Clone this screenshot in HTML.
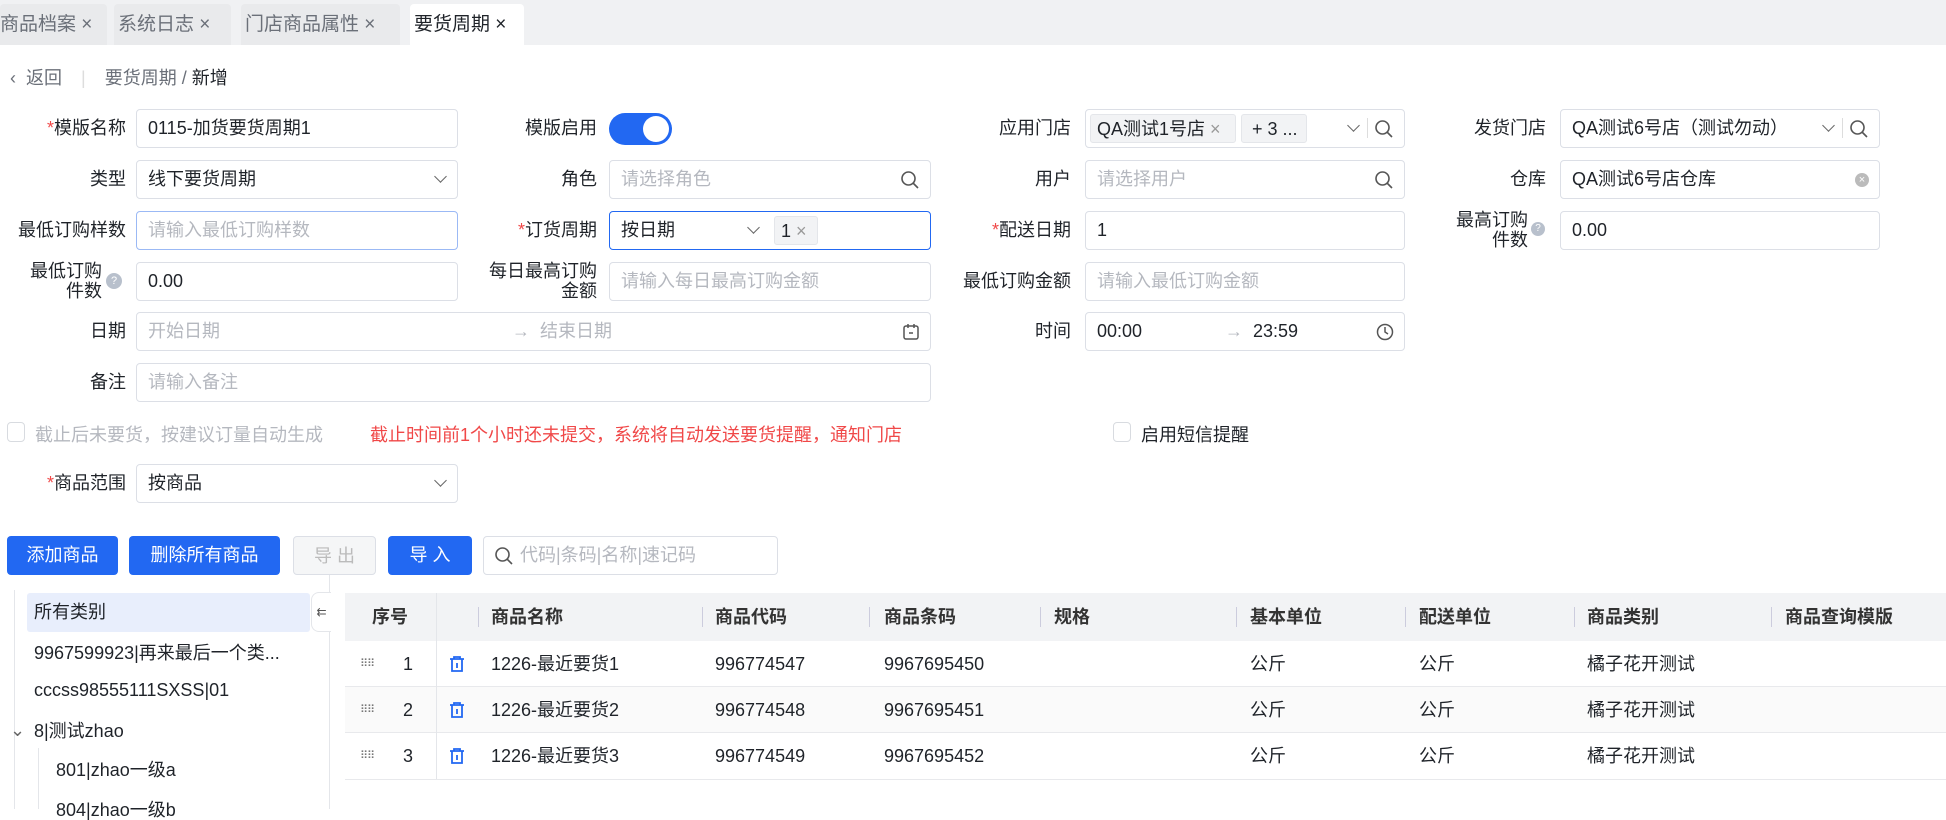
<!DOCTYPE html>
<html><head><meta charset="utf-8"><style>
*{box-sizing:border-box;margin:0;padding:0}
body{width:1946px;height:809px;overflow:hidden;background:#fff;font-family:"Liberation Sans","Noto Sans CJK SC",sans-serif;font-size:18px;color:#1f2329;position:relative}
.a{position:absolute}
.tabbar{left:0;top:0;width:1946px;height:45px;background:#f0f1f3}
.tab{top:4px;height:41px;background:#e9eaec;color:#6b7079;line-height:41px;padding-left:4px;font-size:19px;border-radius:4px 4px 0 0;white-space:nowrap}
.tab.on{background:#fff;color:#1f2329}
.lbl{text-align:right;width:200px;line-height:20px;font-size:18px;color:#1f2329;white-space:nowrap}
.req{color:#f04848}
.in{height:39px;border:1px solid #dcdfe6;border-radius:4px;line-height:37px;padding-left:11px;font-size:18px;background:#fff;white-space:nowrap}
.ph{color:#b5b8bf}
.chev{position:absolute;right:12px;width:9px;height:9px;border-right:1.5px solid #666;border-bottom:1.5px solid #666;transform:rotate(45deg);top:11px}
.btn{top:536px;height:39px;border-radius:4px;background:#2268f2;color:#fff;text-align:center;line-height:39px;font-size:18px}
.th{top:593px;height:48px;line-height:48px;font-weight:bold;font-size:18px;color:#333}
.sep{top:607px;width:1px;height:20px;background:#ccd}
.td{line-height:46px;font-size:18px}
.tree{font-size:18px;line-height:20px;white-space:nowrap}
</style></head><body>
<div class="a tabbar"></div>
<div class="a tab" style="left:0;width:107px;padding-left:0">商品档案 ×</div>
<div class="a tab" style="left:114px;width:117px">系统日志 ×</div>
<div class="a tab" style="left:241px;width:159px">门店商品属性 ×</div>
<div class="a tab on" style="left:410px;width:114px">要货周期 ×</div>

<div class="a" style="left:10px;top:64px;font-size:18px;color:#6b7079">‹&nbsp; 返回 <span style="color:#ddd;margin:0 14px">|</span> 要货周期 / <span style="color:#1f2329">新增</span></div>

<!-- row1 -->
<div class="a lbl" style="left:-74px;top:118px"><span class="req">*</span>模版名称</div>
<div class="a in" style="left:136px;top:109px;width:322px">0115-加货要货周期1</div>
<div class="a lbl" style="left:397px;top:118px">模版启用</div>
<div class="a" style="left:609px;top:113px;width:63px;height:32px;border-radius:16px;background:#2268f2"><div class="a" style="right:3px;top:3px;width:26px;height:26px;border-radius:50%;background:#fff"></div></div>
<div class="a lbl" style="left:871px;top:118px">应用门店</div>
<div class="a in" style="left:1085px;top:109px;width:320px;padding-left:4px">
 <span class="a" style="left:4px;top:4px;height:29px;line-height:29px;background:#f2f3f5;border:1px solid #e4e6ea;border-radius:3px;padding:0 6px;width:146px">QA测试1号店 <span style="color:#999">×</span></span>
 <span class="a" style="left:155px;top:4px;height:29px;line-height:29px;background:#f2f3f5;border:1px solid #e4e6ea;border-radius:3px;padding:0 10px;width:66px">+ 3 ...</span>
 <span class="chev" style="right:46px"></span><span class="a" style="right:36px;top:8px;width:1px;height:20px;background:#ddd"></span>
 <svg class="a" style="right:10px;top:9px" width="20" height="20"><circle cx="8.5" cy="8.5" r="6.5" fill="none" stroke="#555" stroke-width="1.6"/><path d="M13 13l5 5" stroke="#555" stroke-width="1.6"/></svg>
</div>
<div class="a lbl" style="left:1346px;top:118px">发货门店</div>
<div class="a in" style="left:1560px;top:109px;width:320px">QA测试6号店（测试勿动）
 <span class="chev" style="right:46px"></span><span class="a" style="right:36px;top:8px;width:1px;height:20px;background:#ddd"></span>
 <svg class="a" style="right:10px;top:9px" width="20" height="20"><circle cx="8.5" cy="8.5" r="6.5" fill="none" stroke="#555" stroke-width="1.6"/><path d="M13 13l5 5" stroke="#555" stroke-width="1.6"/></svg></div>

<!-- row2 -->
<div class="a lbl" style="left:-74px;top:169px">类型</div>
<div class="a in" style="left:136px;top:160px;width:322px">线下要货周期<span class="chev"></span></div>
<div class="a lbl" style="left:397px;top:169px">角色</div>
<div class="a in ph" style="left:609px;top:160px;width:322px">请选择角色<svg class="a" style="right:10px;top:9px" width="20" height="20"><circle cx="8.5" cy="8.5" r="6.5" fill="none" stroke="#555" stroke-width="1.6"/><path d="M13 13l5 5" stroke="#555" stroke-width="1.6"/></svg></div>
<div class="a lbl" style="left:871px;top:169px">用户</div>
<div class="a in ph" style="left:1085px;top:160px;width:320px">请选择用户<svg class="a" style="right:10px;top:9px" width="20" height="20"><circle cx="8.5" cy="8.5" r="6.5" fill="none" stroke="#555" stroke-width="1.6"/><path d="M13 13l5 5" stroke="#555" stroke-width="1.6"/></svg></div>
<div class="a lbl" style="left:1346px;top:169px">仓库</div>
<div class="a in" style="left:1560px;top:160px;width:320px">QA测试6号店仓库<span class="a" style="right:10px;top:12px;width:14px;height:14px;border-radius:50%;background:#bbb;color:#fff;font-size:11px;line-height:14px;text-align:center">×</span></div>

<!-- row3 -->
<div class="a lbl" style="left:-74px;top:220px">最低订购样数</div>
<div class="a in ph" style="left:136px;top:211px;width:322px;border-color:#9bb9f5">请输入最低订购样数</div>
<div class="a lbl" style="left:397px;top:220px"><span class="req">*</span>订货周期</div>
<div class="a in" style="left:609px;top:211px;width:322px;border:1.5px solid #2268f2">按日期<span class="chev" style="right:172px"></span>
 <span class="a" style="left:164px;top:4px;height:29px;line-height:29px;background:#f2f3f5;border:1px solid #e4e6ea;border-radius:3px;padding:0 6px;width:44px">1 <span style="color:#999">×</span></span></div>
<div class="a lbl" style="left:871px;top:220px"><span class="req">*</span>配送日期</div>
<div class="a in" style="left:1085px;top:211px;width:320px">1</div>
<div class="a lbl" style="left:1328px;top:210px;width:200px">最高订购<br>件数</div>
<div class="a" style="left:1531px;top:222px;width:14px;height:14px;border-radius:50%;background:#b8c0cc;color:#fff;font-size:10px;text-align:center;line-height:14px">?</div>
<div class="a in" style="left:1560px;top:211px;width:320px">0.00</div>

<!-- row4 -->
<div class="a lbl" style="left:-98px;top:261px">最低订购<br>件数</div>
<div class="a" style="left:106px;top:273px;width:16px;height:16px;border-radius:50%;background:#b8c0cc;color:#fff;font-size:11px;text-align:center;line-height:16px">?</div>
<div class="a in" style="left:136px;top:262px;width:322px">0.00</div>
<div class="a lbl" style="left:397px;top:261px">每日最高订购<br>金额</div>
<div class="a in ph" style="left:609px;top:262px;width:322px">请输入每日最高订购金额</div>
<div class="a lbl" style="left:871px;top:271px">最低订购金额</div>
<div class="a in ph" style="left:1085px;top:262px;width:320px">请输入最低订购金额</div>

<!-- row5 -->
<div class="a lbl" style="left:-74px;top:321px">日期</div>
<div class="a in ph" style="left:136px;top:312px;width:795px">开始日期<span class="a" style="left:375px;top:0">→&nbsp;&nbsp;结束日期</span>
 <svg class="a" style="right:10px;top:10px" width="18" height="18"><rect x="2" y="3" width="14" height="13" rx="2" fill="none" stroke="#555" stroke-width="1.5"/><path d="M6 1v4M12 1v4M7 10h4" stroke="#555" stroke-width="1.5"/></svg></div>
<div class="a lbl" style="left:871px;top:321px">时间</div>
<div class="a in" style="left:1085px;top:312px;width:320px">00:00<span class="a" style="left:139px;top:0"><span class="ph">→</span>&nbsp;&nbsp;23:59</span>
 <svg class="a" style="right:10px;top:10px" width="18" height="18"><circle cx="9" cy="9" r="7.5" fill="none" stroke="#555" stroke-width="1.5"/><path d="M9 4v5l3 2" fill="none" stroke="#555" stroke-width="1.5"/></svg></div>

<!-- row6 -->
<div class="a lbl" style="left:-74px;top:372px">备注</div>
<div class="a in ph" style="left:136px;top:363px;width:795px">请输入备注</div>

<!-- checkbox row -->
<div class="a" style="left:7px;top:422px;width:18px;height:20px;border:1px solid #d8dbe0;border-radius:4px"></div>
<div class="a" style="left:35px;top:421px;color:#b5b8bf">截止后未要货，按建议订量自动生成</div>
<div class="a" style="left:370px;top:421px;color:#f04848">截止时间前1个小时还未提交，系统将自动发送要货提醒，通知门店</div>
<div class="a" style="left:1113px;top:422px;width:18px;height:20px;border:1px solid #d8dbe0;border-radius:4px"></div>
<div class="a" style="left:1141px;top:421px">启用短信提醒</div>

<div class="a lbl" style="left:-74px;top:473px"><span class="req">*</span>商品范围</div>
<div class="a in" style="left:136px;top:464px;width:322px">按商品<span class="chev"></span></div>

<!-- buttons -->
<div class="a btn" style="left:7px;width:111px">添加商品</div>
<div class="a btn" style="left:129px;width:151px">删除所有商品</div>
<div class="a btn" style="left:293px;width:83px;background:#f5f6f7;border:1px solid #dcdfe6;color:#bbb">导 出</div>
<div class="a btn" style="left:388px;width:84px">导 入</div>
<div class="a in ph" style="left:483px;top:536px;width:295px;padding-left:36px">代码|条码|名称|速记码<svg class="a" style="left:10px;top:9px" width="20" height="20"><circle cx="8.5" cy="8.5" r="6.5" fill="none" stroke="#555" stroke-width="1.6"/><path d="M13 13l5 5" stroke="#555" stroke-width="1.6"/></svg></div>

<!-- tree -->
<div class="a" style="left:329px;top:575px;width:1px;height:234px;background:#e4e6ea"></div>
<div class="a" style="left:14px;top:590px;width:1px;height:219px;background:#e4e6ea"></div>
<div class="a" style="left:27px;top:593px;width:283px;height:39px;background:#e8eefc;border-radius:3px"></div>
<div class="a" style="left:311px;top:592px;width:20px;height:40px;background:#fff;border:1px solid #e4e6ea;border-right:none;border-radius:8px 0 0 8px;font-size:12px;line-height:38px;text-align:center;color:#555">⇇</div>
<div class="a tree" style="left:34px;top:602px">所有类别</div>
<div class="a tree" style="left:34px;top:643px">9967599923|再来最后一个类...</div>
<div class="a tree" style="left:34px;top:680px">cccss98555111SXSS|01</div>
<div class="a tree" style="left:10px;top:720px;color:#666">⌄</div>
<div class="a tree" style="left:34px;top:721px">8|测试zhao</div>
<div class="a" style="left:38px;top:748px;width:1px;height:61px;background:#e4e6ea"></div>
<div class="a tree" style="left:56px;top:760px">801|zhao一级a</div>
<div class="a tree" style="left:56px;top:800px">804|zhao一级b</div>

<!-- table -->
<div class="a" style="left:345px;top:593px;width:1601px;height:48px;background:#f2f3f5"></div>
<div class="a" style="left:345px;top:686px;width:1601px;height:46px;background:#fafafa"></div>
<div class="a" style="left:345px;top:686px;width:1601px;height:1px;background:#e8e9ec"></div>
<div class="a" style="left:345px;top:732px;width:1601px;height:1px;background:#e8e9ec"></div>
<div class="a" style="left:345px;top:779px;width:1601px;height:1px;background:#e8e9ec"></div>
<div class="a" style="left:436px;top:593px;width:1px;height:186px;background:#e4e6ea"></div>
<div class="a th" style="left:372px">序号</div>
<div class="a sep" style="left:478px"></div><div class="a th" style="left:491px">商品名称</div>
<div class="a sep" style="left:702px"></div><div class="a th" style="left:715px">商品代码</div>
<div class="a sep" style="left:869px"></div><div class="a th" style="left:884px">商品条码</div>
<div class="a sep" style="left:1040px"></div><div class="a th" style="left:1054px">规格</div>
<div class="a sep" style="left:1236px"></div><div class="a th" style="left:1250px">基本单位</div>
<div class="a sep" style="left:1405px"></div><div class="a th" style="left:1419px">配送单位</div>
<div class="a sep" style="left:1574px"></div><div class="a th" style="left:1587px">商品类别</div>
<div class="a sep" style="left:1771px"></div><div class="a th" style="left:1785px">商品查询模版</div>

<div class="a" style="left:0;top:641px;width:1946px">
 <div style="position:relative;height:46px" class="td">
  <span class="a" style="left:360px;color:#777;font-size:11px;letter-spacing:-1px">⠿⠿</span><span class="a" style="left:403px">1</span>
  <svg class="a" style="left:449px;top:14px" width="16" height="18"><path d="M1 4h14M5 4V2h6v2M3 4v12h10V4M8 8v5" fill="none" stroke="#2268f2" stroke-width="1.8"/></svg>
  <span class="a" style="left:491px">1226-最近要货1</span><span class="a" style="left:715px">996774547</span><span class="a" style="left:884px">9967695450</span><span class="a" style="left:1250px">公斤</span><span class="a" style="left:1419px">公斤</span><span class="a" style="left:1587px">橘子花开测试</span>
 </div>
 <div style="position:relative;height:46px" class="td">
  <span class="a" style="left:360px;color:#777;font-size:11px;letter-spacing:-1px">⠿⠿</span><span class="a" style="left:403px">2</span>
  <svg class="a" style="left:449px;top:14px" width="16" height="18"><path d="M1 4h14M5 4V2h6v2M3 4v12h10V4M8 8v5" fill="none" stroke="#2268f2" stroke-width="1.8"/></svg>
  <span class="a" style="left:491px">1226-最近要货2</span><span class="a" style="left:715px">996774548</span><span class="a" style="left:884px">9967695451</span><span class="a" style="left:1250px">公斤</span><span class="a" style="left:1419px">公斤</span><span class="a" style="left:1587px">橘子花开测试</span>
 </div>
 <div style="position:relative;height:46px" class="td">
  <span class="a" style="left:360px;color:#777;font-size:11px;letter-spacing:-1px">⠿⠿</span><span class="a" style="left:403px">3</span>
  <svg class="a" style="left:449px;top:14px" width="16" height="18"><path d="M1 4h14M5 4V2h6v2M3 4v12h10V4M8 8v5" fill="none" stroke="#2268f2" stroke-width="1.8"/></svg>
  <span class="a" style="left:491px">1226-最近要货3</span><span class="a" style="left:715px">996774549</span><span class="a" style="left:884px">9967695452</span><span class="a" style="left:1250px">公斤</span><span class="a" style="left:1419px">公斤</span><span class="a" style="left:1587px">橘子花开测试</span>
 </div>
</div>
</body></html>
